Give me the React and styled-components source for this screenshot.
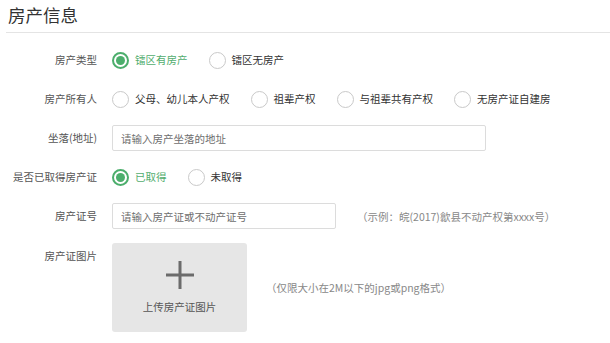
import React from "react";
import styled, { createGlobalStyle } from "styled-components";

const GlobalStyle = createGlobalStyle`
  html, body {
    margin: 0;
    padding: 0;
    background: #fff;
  }
  body {
    font-family: "Noto Sans CJK SC", "Noto Sans", sans-serif;
    color: #333;
  }
`;

const Page = styled.div`
  width: 610px;
  height: 343px;
  overflow: hidden;
`;

const Header = styled.div`
  height: 32px;
  margin-left: 6px;
  border-bottom: 1px solid #e4e4e4;
`;

const Title = styled.h2`
  margin: 0 0 0 2px;
  font-size: 17.5px;
  font-weight: 400;
  line-height: 30px;
  color: #333;
`;

const Form = styled.div`
  display: grid;
  grid-template-columns: 97px 1fr;
  column-gap: 15px;
  row-gap: 13px;
  padding-top: 14px;
`;

const Label = styled.div`
  font-size: 10.5px;
  line-height: 16px;
  color: #555;
  text-align: right;
  white-space: nowrap;
  align-self: ${(p) => (p.$top ? "start" : "center")};
  padding-top: ${(p) => (p.$top ? "6px" : "0")};
`;

const Field = styled.div`
  display: flex;
  align-items: center;
  min-height: 26px;
  gap: ${(p) => p.$gap || 21}px;
  margin-top: ${(p) => p.$mt || 0}px;
`;

const Option = styled.label`
  display: flex;
  align-items: center;
  gap: 6px;
  font-size: 10.5px;
  line-height: 16px;
  color: ${(p) => (p.$checked ? "#52ad6e" : "#333")};
  white-space: nowrap;
`;

const Circle = styled.span`
  box-sizing: border-box;
  width: 17px;
  height: 17px;
  border-radius: 50%;
  border: ${(p) => (p.$checked ? "2px solid #4cae6c" : "1.5px solid #c9c9c9")};
  display: flex;
  align-items: center;
  justify-content: center;

  &::after {
    content: "";
    display: ${(p) => (p.$checked ? "block" : "none")};
    width: 9px;
    height: 9px;
    border-radius: 50%;
    background: #4cae6c;
  }
`;

const Input = styled.input`
  box-sizing: border-box;
  width: ${(p) => p.$w}px;
  height: 26px;
  border: 1px solid #dcdcdc;
  border-radius: 2px;
  padding: 0 8px;
  font-family: inherit;
  font-size: 10.5px;
  color: #333;
  outline: none;

  &::placeholder {
    color: #6e6e6e;
  }
`;

const Hint = styled.span`
  font-size: 10.5px;
  color: #888;
  white-space: nowrap;
`;

const Upload = styled.div`
  width: 135px;
  height: 89px;
  border-radius: 3px;
  background: #e6e6e6;
  display: flex;
  flex-direction: column;
  align-items: center;
  padding-top: 18px;
  box-sizing: border-box;
  gap: 10px;
  font-size: 10.5px;
  color: #555;
`;

const Radio = ({ label, checked }) => (
  <Option $checked={checked}>
    <Circle $checked={checked} />
    {label}
  </Option>
);

const Plus = () => (
  <svg width="28" height="28" viewBox="0 0 28 28">
    <rect x="12.5" y="0" width="3" height="28" fill="#6b6b6b" />
    <rect x="0" y="12.5" width="28" height="3" fill="#6b6b6b" />
  </svg>
);

export default function App() {
  return (
    <Page>
      <GlobalStyle />
      <Header>
        <Title>房产信息</Title>
      </Header>
      <Form>
        <Label>房产类型</Label>
        <Field>
          <Radio label="镭区有房产" checked />
          <Radio label="镭区无房产" />
        </Field>

        <Label>房产所有人</Label>
        <Field>
          <Radio label="父母、幼儿本人产权" />
          <Radio label="祖辈产权" />
          <Radio label="与祖辈共有产权" />
          <Radio label="无房产证自建房" />
        </Field>

        <Label>坐落(地址)</Label>
        <Field>
          <Input $w={374} placeholder="请输入房产坐落的地址" />
        </Field>

        <Label>是否已取得房产证</Label>
        <Field>
          <Radio label="已取得" checked />
          <Radio label="未取得" />
        </Field>

        <Label>房产证号</Label>
        <Field>
          <Input $w={224} placeholder="请输入房产证或不动产证号" />
          <Hint>（示例：皖(2017)歙县不动产权第xxxx号）</Hint>
        </Field>

        <Label $top>房产证图片</Label>
        <Field $gap={19} $mt={1}>
          <Upload>
            <Plus />
            上传房产证图片
          </Upload>
          <Hint>（仅限大小在2M以下的jpg或png格式）</Hint>
        </Field>
      </Form>
    </Page>
  );
}
